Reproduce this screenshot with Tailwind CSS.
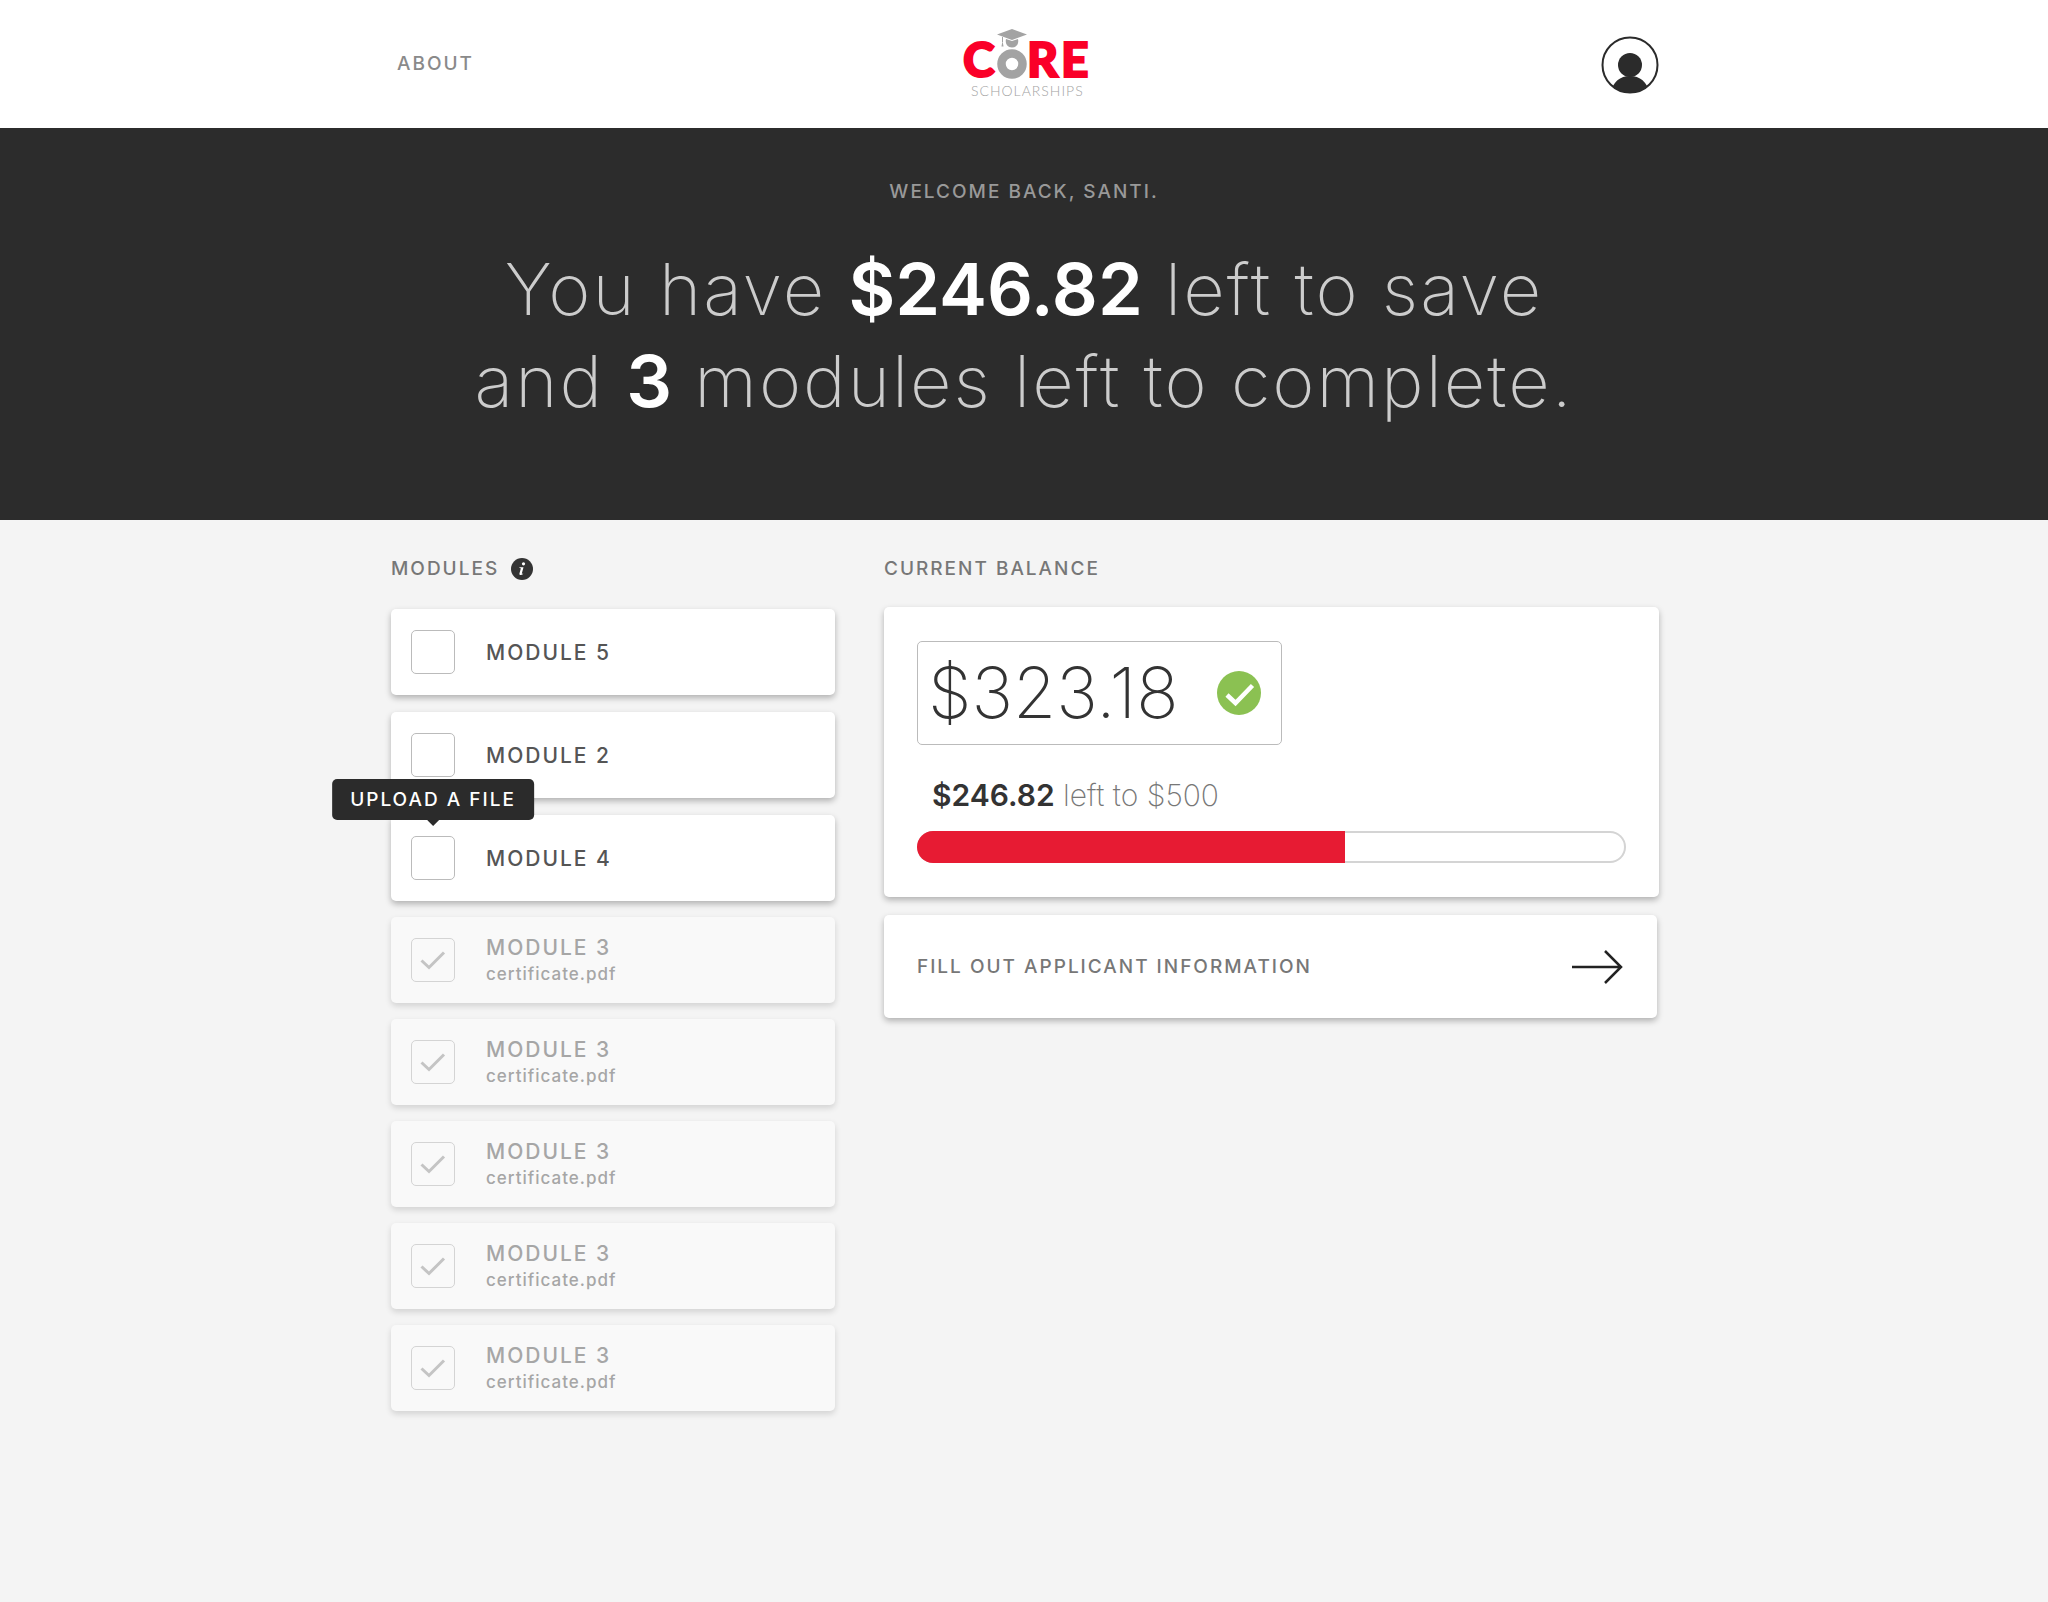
<!DOCTYPE html>
<html lang="en">
<head>
<meta charset="utf-8">
<meta name="viewport" content="width=device-width, initial-scale=1">
<title>Core Scholarships</title>
<script src="https://cdn.jsdelivr.net/npm/@tailwindcss/browser@4"></script>
</head>
<body class="min-h-screen bg-[#f4f4f4] font-['Inter',sans-serif] text-[#333]">

<header class="bg-white">
  <div class="mx-auto grid h-32 max-w-[1270px] grid-cols-3 items-center">
    <a href="#" class="justify-self-start pl-2 text-[19px] font-medium tracking-[2px] text-[#8a8a8a]">ABOUT</a>
    <a href="#" class="justify-self-center" aria-label="Core Scholarships">
      <svg class="block h-[72px] w-[128px] overflow-visible" viewBox="0 0 128 72">
        <g fill="#fa0028" stroke="#fa0028" stroke-width="2" font-family="Lato" font-weight="900" font-size="48">
          <text x="3" y="49">C</text>
          <text x="67" y="49">R</text>
          <text x="101" y="49">E</text>
        </g>
        <circle cx="52" cy="36" r="15.500" fill="#fff"/>
        <circle cx="52" cy="36" r="10.500" fill="#fff" stroke="#a3a3a3" stroke-width="8.500"/>
        <path d="M46 11l6 2 6-2c1 4-1 8.500-6 8.500s-7-4.500-6-8.500z" fill="#a3a3a3"/>
        <path d="M37 6.500 52 1l15 5.500L52 12z" fill="#a3a3a3"/>
        <path d="M42.500 9v5" stroke="#a3a3a3" stroke-width="1"/>
        <path d="M42.500 13l1 5.500h-2z" fill="#a3a3a3"/>
        <text x="11" y="68" font-family="Lato" font-weight="300" font-size="14" letter-spacing="1" fill="#a3a3a3">SCHOLARSHIPS</text>
      </svg>
    </a>
    <button type="button" class="cursor-pointer justify-self-end pt-0.5" aria-label="Account">
      <svg class="block size-[58px]" viewBox="0 0 58 58">
        <clipPath id="ring"><circle cx="29" cy="29" r="28"/></clipPath>
        <circle cx="29" cy="29" r="27.500" fill="#fff" stroke="#2b2b2b" stroke-width="2"/>
        <g clip-path="url(#ring)" fill="#2b2b2b"><circle cx="29" cy="29" r="12"/><path d="M10 58c1-12 9-18 19-18s18 6 19 18z"/></g>
      </svg>
    </button>
  </div>
</header>

<section class="bg-[#2c2c2c] px-6 pt-[50px] pb-[93px] text-center">
  <p class="text-[19px] leading-7 font-medium tracking-[2px] text-[#999]">WELCOME BACK, SANTI.</p>
  <h1 class="mt-[37px] text-7xl leading-[92px] font-extralight tracking-[2px] text-[#ccc]">You have <strong class="font-semibold tracking-normal text-white">$246.82</strong> left to save<br>and <strong class="font-semibold tracking-normal text-white">3</strong> modules left to complete.</h1>
</section>

<main class="mx-auto flex max-w-[1270px] gap-[49px] pt-[35px] pb-24 pl-0.5">
  <section class="w-[444px] shrink-0">
    <div class="flex items-center gap-3">
      <h2 class="text-[19px] leading-7 font-medium tracking-[2px] text-[#777]">MODULES</h2>
      <button type="button" class="cursor-pointer" aria-label="About modules">
        <svg class="block size-[22px]" viewBox="0 0 22 22"><circle cx="11" cy="11" r="11" fill="#333"/><circle cx="12.500" cy="5.800" r="1.600" fill="#fff"/><path d="M8.500 9.200h4l-1.600 6c-.2.900.4.800 1.300.1l-.3 1c-1.600 1.200-4 1.200-3.400-1.100l1.200-4.300c.2-.8-.3-.9-1.300-.8z" fill="#fff"/></svg>
      </button>
    </div>
    <ul id="pending" class="mt-[26px] grid gap-[17px]"></ul>
    <ul id="done" class="mt-4 grid gap-4"></ul>
  </section>

  <section class="min-w-0 flex-1">
    <h2 class="text-[19px] leading-7 font-medium tracking-[2px] text-[#777]">CURRENT BALANCE</h2>
    <div class="mt-6 rounded-[5px] bg-white px-[33px] py-[34px] shadow-[0_3px_6px_rgba(0,0,0,0.28)]">
      <div class="flex h-[104px] w-[365px] items-center rounded-[5px] border border-[#bbb] pr-5 pl-2.5">
        <input type="text" value="$323.18" aria-label="Current balance" class="w-0 flex-1 bg-transparent text-[70px] leading-[92px] font-extralight text-[#333] outline-none">
        <svg class="size-11 shrink-0" viewBox="0 0 44 44"><circle cx="22" cy="22" r="22" fill="#8bc152"/><path d="M10 24l8.500 8L35.500 14.500" fill="none" stroke="#fff" stroke-width="4.500"/></svg>
      </div>
      <p class="mt-8 pl-[15px] text-3xl leading-9 font-extralight text-[#777]"><strong class="font-semibold text-[#333]">$246.82</strong> left to $500</p>
      <div class="mt-[18px] h-8 overflow-hidden rounded-full shadow-[inset_0_0_0_2px_#d4d4d4]" role="progressbar" aria-label="Saved" aria-valuemin="0" aria-valuemax="100" aria-valuenow="60">
        <div class="h-full bg-[#e71b33]" style="width:60.4%"></div>
      </div>
    </div>
    <a href="#" class="mt-[18px] mr-0.5 flex h-[103px] items-center justify-between rounded-[5px] bg-white pr-[34px] pl-[33px] shadow-[0_3px_6px_rgba(0,0,0,0.28)]">
      <span class="text-[19px] leading-7 font-medium tracking-[2px] text-[#777]">FILL OUT APPLICANT INFORMATION</span>
      <svg class="h-[34px] w-[51px]" viewBox="0 0 51 34" fill="none" stroke="#222" stroke-width="2.500"><path d="M0 17h49M33 1l16 16-16 16"/></svg>
    </a>
  </section>
</main>

<script>
  const pending = [5, 2, 4];
  const done = [3, 3, 3, 3, 3];
  const box = 'block size-11 appearance-none rounded-[5px] border';
  document.getElementById('pending').innerHTML = pending.map((n, i) => `
    <li class="flex h-[86px] items-center gap-[31px] rounded-[5px] bg-white pl-5 shadow-[0_3px_6px_rgba(0,0,0,0.28)]">
      <span class="relative">
        <input type="checkbox" id="p${i}" class="${box} border-[#bbb] bg-white">
        ${n === 4 ? `<span role="tooltip" class="absolute bottom-full left-1/2 mb-4 -translate-x-1/2 rounded-[5px] bg-[#2b2b2b] px-[18px] py-1.5 text-[19px] leading-[29px] font-medium tracking-[2px] whitespace-nowrap text-white">UPLOAD A FILE<svg class="absolute top-full left-1/2 h-1.5 w-3 -translate-x-1/2" viewBox="0 0 12 6"><path d="M0 0h12L6 6z" fill="#2b2b2b"/></svg></span>` : ''}
      </span>
      <label for="p${i}" class="pt-0.5 text-[21px] leading-6 font-medium tracking-[2px] text-[#555]">MODULE ${n}</label>
    </li>`).join('');
  document.getElementById('done').innerHTML = done.map((n, i) => `
    <li class="flex h-[86px] items-center gap-[31px] rounded-[5px] bg-[#f9f9f9] pl-5 shadow-[0_3px_6px_rgba(0,0,0,0.14)]">
      <span class="relative">
        <input type="checkbox" checked id="d${i}" class="${box} border-[#d4d4d4]">
        <svg class="pointer-events-none absolute inset-0 size-11" viewBox="0 0 44 44"><path d="M10.500 22.500l7.500 7L33 14.500" fill="none" stroke="#c4c4c4" stroke-width="3"/></svg>
      </span>
      <label for="d${i}" class="grid pt-1 font-medium text-[#a6a6a6]"><span class="text-[21px] leading-6 tracking-[2px]">MODULE ${n}</span><span class="text-[17px] leading-7 tracking-[1px]">certificate.pdf</span></label>
    </li>`).join('');
</script>
</body>
</html>
